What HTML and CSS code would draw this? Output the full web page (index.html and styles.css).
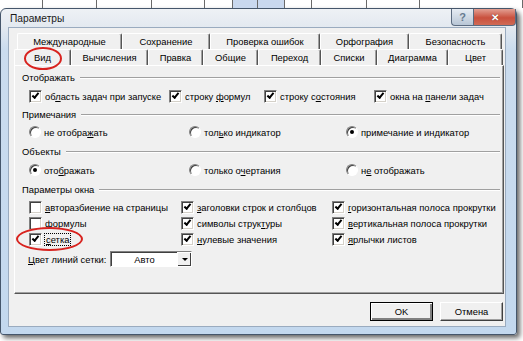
FILE: index.html
```html
<!DOCTYPE html>
<html lang="ru">
<head>
  <meta charset="UTF-8" />
  <title>Параметры</title>
  <link rel="stylesheet" href="styles.css">
</head>
<body>
  <div class="sheet">
    <span></span><span></span><span></span><span></span><span></span>
    <span class="hl"></span><span class="hl"></span><span></span><span></span><span></span><span></span>
  </div>

  <div class="window">
    <div class="titlebar">
      <span class="title">Параметры</span>
      <div class="caption-btns">
        <span class="cap help">?</span>
        <span class="cap close">✕</span>
      </div>
    </div>

    <div class="client">
      <div class="tabs back">
        <span class="tab w105">Международные</span>
        <span class="tab w88">Сохранение</span>
        <span class="tab w110">Проверка ошибок</span>
        <span class="tab w89">Орфография</span>
        <span class="tab w93">Безопасность</span>
      </div>
      <div class="tabs front">
        <span class="tab active w57">Вид</span>
        <span class="tab w77">Вычисления</span>
        <span class="tab w55">Правка</span>
        <span class="tab w55">Общие</span>
        <span class="tab w63">Переход</span>
        <span class="tab w56">Списки</span>
        <span class="tab w71">Диаграмма</span>
        <span class="tab w55">Цвет</span>
      </div>

      <div class="panel">
        <div class="group-title g1">Отображать</div>
        <div class="row cols-show">
          <label class="check"><span class="box on"></span><span>об<u>л</u>асть задач при запуске</span></label>
          <label class="check"><span class="box on"></span><span>строку <u>ф</u>ормул</span></label>
          <label class="check"><span class="box on"></span><span>строку с<u>о</u>стояния</span></label>
          <label class="check"><span class="box on"></span><span>окна на <u>п</u>анели задач</span></label>
        </div>

        <div class="group-title g2">Примечания</div>
        <div class="row cols-notes">
          <label class="check"><span class="radio"></span><span>не отобра<u>ж</u>ать</span></label>
          <label class="check"><span class="radio"></span><span>тол<u>ь</u>ко индикатор</span></label>
          <label class="check"><span class="radio on"></span><span>примечание и ин<u>д</u>икатор</span></label>
        </div>

        <div class="group-title g3">Объекты</div>
        <div class="row cols-notes">
          <label class="check"><span class="radio on"></span><span>ото<u>б</u>ражать</span></label>
          <label class="check"><span class="radio"></span><span>только о<u>ч</u>ертания</span></label>
          <label class="check"><span class="radio"></span><span>н<u>е</u> отображать</span></label>
        </div>

        <div class="group-title g4">Параметры окна</div>
        <div class="grid-win">
          <label class="check"><span class="box"></span><span><u>а</u>вторазбиение на страницы</span></label>
          <label class="check"><span class="box on"></span><span><u>з</u>аголовки строк и столбцов</span></label>
          <label class="check"><span class="box on"></span><span><u>г</u>оризонтальная полоса прокрутки</span></label>
          <label class="check"><span class="box"></span><span><u>ф</u>ормулы</span></label>
          <label class="check"><span class="box on"></span><span>символы струк<u>т</u>уры</span></label>
          <label class="check"><span class="box on"></span><span><u>в</u>ертикальная полоса прокрутки</span></label>
          <label class="check marked"><span class="box on"></span><span class="focus"><u>с</u>етка</span></label>
          <label class="check"><span class="box on"></span><span><u>н</u>улевые значения</span></label>
          <label class="check"><span class="box on"></span><span><u>я</u>рлычки листов</span></label>
        </div>

        <div class="color-row">
          <span><u>Ц</u>вет линий сетки:</span>
          <div class="select">
            <span class="value">Авто</span>
            <span class="drop"></span>
          </div>
        </div>
      </div>

      <div class="buttons">
        <button class="btn default">OK</button>
        <button class="btn">Отмена</button>
      </div>
    </div>
  </div>
</body>
</html>
```

FILE: styles.css
```css
body {
  margin: 0;
  width: 523px;
  height: 341px;
  overflow: hidden;
  background: #fff;
  font-family: 'Liberation Sans', Arial, sans-serif;
  font-size: 9.4px;
  color: #000;
}

/* spreadsheet behind the dialog */
.sheet {
  display: grid;
  grid-template-columns: 43px 54px 55px 53px 28px 25px 27px 27px 55px 53px 1fr;
  height: 8px;
}

.sheet span {
  border-right: 1px solid #6a6a6a;
}

.sheet span.hl {
  background: #c9d8ee;
}

.window {
  width: 517px;
  height: 327px;
  box-sizing: border-box;
  border: 1px solid #45566b;
  border-radius: 6px 6px 3px 3px;
  background: linear-gradient(to bottom, #eef1f5 0, #e3e9f0 18px, #cbdcee 40px, #c3d8ee 100%);
  box-shadow: 3px 3px 5px rgba(0, 0, 0, 0.6);
  padding: 0 10px 7px 7px;
  display: flex;
  flex-direction: column;
}

.titlebar {
  height: 18px;
  display: flex;
  align-items: center;
  justify-content: space-between;
}

.title {
  padding-left: 2px;
  font-size: 10.2px;
  color: #1a1a1a;
}

.caption-btns {
  display: flex;
  align-self: flex-start;
  margin-right: -10px;
}

.cap {
  height: 16px;
  display: flex;
  align-items: center;
  justify-content: center;
  border: 1px solid #5b6b80;
  border-top: none;
  font-weight: bold;
}

.cap.help {
  width: 21px;
  border-radius: 0 0 0 4px;
  border-right: none;
  background: linear-gradient(to bottom, #e6ecf3, #b8c6d6);
  color: #667a90;
  font-size: 11px;
}

.cap.close {
  width: 41px;
  border-radius: 0 0 4px 0;
  background: linear-gradient(to bottom, #e3a093, #c9503d 55%, #d06a55);
  color: #fff;
  font-size: 10px;
  text-shadow: 0 0 1px #5a1a10;
}

.client {
  flex: 1;
  background: #f0f0f0;
  border: 1px solid #9aabbf;
  display: flex;
  flex-direction: column;
}

.tabs {
  display: flex;
  height: 16px;
}

.tabs.back {
  margin-top: 5px;
  margin-left: 8px;
}

.tabs.front {
  margin-left: 5px;
}

.tab {
  box-sizing: border-box;
  display: flex;
  align-items: center;
  justify-content: center;
  border-left: 1px solid #fff;
  border-top: 1px solid #fff;
  border-right: 1px solid #555;
  box-shadow: inset -1px 0 #a0a0a0;
  border-radius: 2px 2px 0 0;
}

.tab.active {
  position: relative;
}

/* hand-drawn red mark around the tab */
.tab.active::after {
  content: "";
  position: absolute;
  left: 9px;
  top: -3px;
  width: 34px;
  height: 19px;
  border: 2px solid #d8231f;
  border-radius: 50%;
}

.w105 { width: 105px; }
.w88 { width: 88px; }
.w110 { width: 110px; }
.w89 { width: 89px; }
.w93 { width: 93px; }
.w57 { width: 57px; }
.w77 { width: 77px; }
.w55 { width: 55px; }
.w63 { width: 63px; }
.w56 { width: 56px; }
.w71 { width: 71px; }

.panel {
  margin-left: 5px;
  width: 490px;
  height: 229px;
  box-sizing: border-box;
  border-left: 1px solid #fff;
  border-top: 1px solid #fff;
  border-right: 1px solid #555;
  border-bottom: 1px solid #555;
  box-shadow: inset -1px -1px #a0a0a0;
  padding: 0 3px 0 7px;
}

.group-title {
  display: flex;
  align-items: center;
  height: 16px;
  line-height: 16px;
}

.group-title::after {
  content: "";
  flex: 1;
  margin-left: 5px;
  border-top: 1px solid #a0a0a0;
  border-bottom: 1px solid #fff;
}

.g1 { margin-top: 4px; }
.g2 { margin-top: 3px; }
.g3 { margin-top: 4px; }
.g4 { margin-top: 4px; }

.row {
  display: grid;
  height: 16px;
  padding-left: 7px;
}

.cols-show {
  margin-top: 2px;
  grid-template-columns: 140px 95px 110px 1fr;
}

.cols-notes {
  margin-top: 1px;
  grid-template-columns: 160px 157px 1fr;
}

.g3 + .cols-notes { margin-top: 2px; }

.grid-win {
  display: grid;
  grid-template-columns: 152px 151px 1fr;
  grid-auto-rows: 16px;
  margin-top: 1px;
  padding-left: 7px;
}

.check {
  display: flex;
  align-items: center;
  gap: 3px;
  white-space: nowrap;
}

.box {
  position: relative;
  flex: none;
  width: 13px;
  height: 13px;
  box-sizing: border-box;
  background: #fff;
  border: 1px solid;
  border-color: #808080 #fff #fff #808080;
  box-shadow: inset 1px 1px #404040, inset -1px -1px #d4d0c8;
}

.box.on::after {
  content: "";
  position: absolute;
  left: 2px;
  top: 2px;
  width: 5px;
  height: 2px;
  border-left: 2px solid #000;
  border-bottom: 2px solid #000;
  transform: rotate(-50deg);
}

.radio {
  position: relative;
  flex: none;
  width: 12px;
  height: 12px;
  box-sizing: border-box;
  border-radius: 50%;
  background: #fff;
  border: 1px solid;
  border-color: #808080 #fff #fff #808080;
  box-shadow: inset 1px 1px #404040;
}

.radio.on::after {
  content: "";
  position: absolute;
  left: 3px;
  top: 3px;
  width: 4px;
  height: 4px;
  border-radius: 50%;
  background: #000;
}

.marked {
  position: relative;
}

.marked::after {
  content: "";
  position: absolute;
  left: -13px;
  top: -4px;
  width: 63px;
  height: 20px;
  border: 2px solid #d8231f;
  border-radius: 50%;
}

.focus {
  outline: 1px dotted #000;
  padding: 0 1px;
}

.color-row {
  display: flex;
  align-items: center;
  gap: 4px;
  margin-top: 4px;
  padding-left: 6px;
}

.select {
  width: 82px;
  height: 16px;
  box-sizing: border-box;
  display: flex;
  background: #fff;
  border: 1px solid;
  border-color: #808080 #fff #fff #808080;
  box-shadow: inset 1px 1px #404040;
}

.select .value {
  flex: 1;
  display: flex;
  align-items: center;
  justify-content: center;
}

.select .drop {
  width: 13px;
  background: #f0f0f0;
  border-left: 1px solid #fff;
  border-top: 1px solid #fff;
  box-shadow: inset -1px -1px #404040;
  display: flex;
  align-items: center;
  justify-content: center;
}

.select .drop::before {
  content: "";
  border-left: 3px solid transparent;
  border-right: 3px solid transparent;
  border-top: 3px solid #000;
}

.buttons {
  display: flex;
  justify-content: flex-end;
  gap: 7px;
  margin-top: 8px;
  padding-right: 2px;
}

.btn {
  width: 63px;
  height: 19px;
  box-sizing: border-box;
  font-family: inherit;
  font-size: 9.4px;
  background: #f0f0f0;
  border: 1px solid;
  border-color: #fff #404040 #404040 #fff;
  box-shadow: inset -1px -1px #a0a0a0;
  padding: 0;
}

.btn.default {
  border-color: #000;
  box-shadow: inset 1px 1px #fff, inset -2px -2px #808080;
}
```
